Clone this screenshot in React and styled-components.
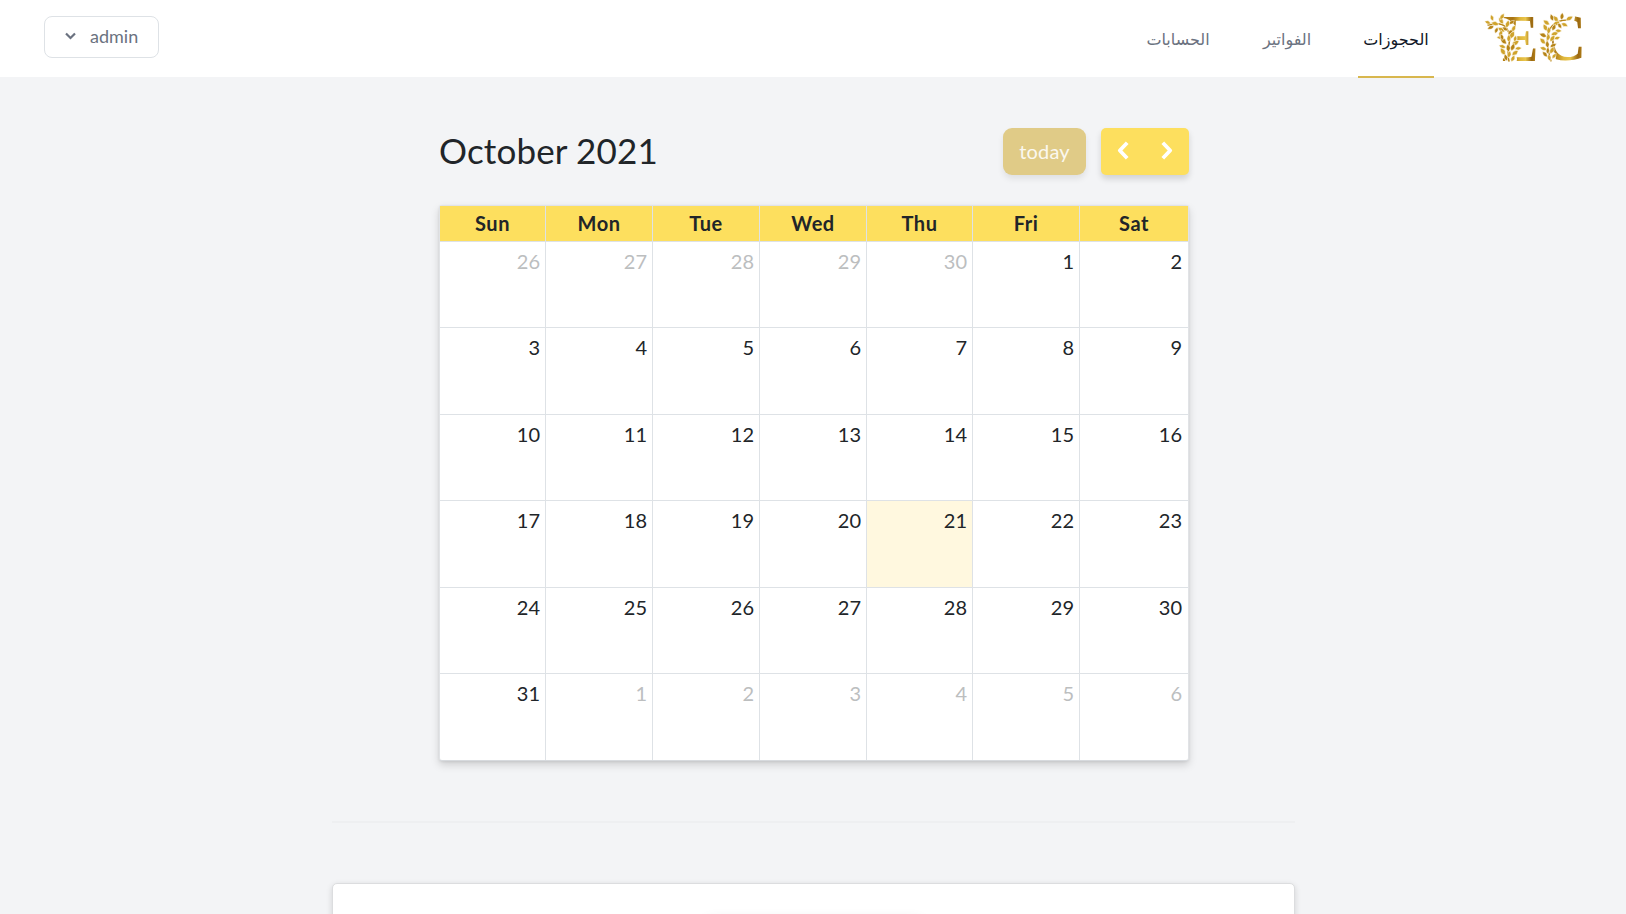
import React from 'react';
import styled, { createGlobalStyle } from 'styled-components';

const GlobalStyle = createGlobalStyle`
  * { box-sizing: border-box; }
  html, body { margin: 0; height: 100%; overflow: hidden; }
  body {
    background: #f3f4f6;
    color: #212529;
    font-family: Lato, "DejaVu Sans", sans-serif;
    font-size: 20px;
  }
  button { font: inherit; border: 0; margin: 0; padding: 0; }
`;

const Page = styled.div`
  height: 100vh;
  overflow: hidden;
  display: flex;
  flex-direction: column;
  align-items: center;
`;

const TopBar = styled.header`
  width: 100%;
  height: 77px;
  flex: none;
  background: #fff;
  display: flex;
  justify-content: space-between;
  padding: 0 40px 0 44px;
`;

const UserButton = styled.button`
  width: 115px;
  height: 42px;
  margin-top: 16px;
  padding: 0 0 2px 20px;
  display: flex;
  align-items: center;
  gap: 14px;
  background: #fff;
  border: 1px solid #dee2e6;
  border-radius: 8px;
  color: #6b7280;
  font-size: 18px;
`;

const NavArea = styled.div`
  display: flex;
`;

const Nav = styled.nav`
  display: flex;
  gap: 40px;
  height: 78px;
  margin-right: 49px;
`;

const NavLink = styled.a`
  width: ${(p) => p.$width}px;
  height: 78px;
  display: flex;
  justify-content: center;
  padding-top: 28px;
  line-height: 24px;
  font-family: "DejaVu Sans", sans-serif;
  font-size: 16px;
  white-space: nowrap;
  color: ${(p) => (p.$active ? '#111827' : '#6b7280')};
  border-bottom: 2px solid ${(p) => (p.$active ? '#d8b74e' : 'transparent')};
`;

const Logo = styled.svg`
  width: 103px;
  height: 77px;
`;

const Calendar = styled.main`
  width: 750px;
  flex: none;
  margin: 51px 0 0 2px;
`;

const Toolbar = styled.div`
  height: 47px;
  display: flex;
  align-items: center;
  justify-content: space-between;
  margin-bottom: 30px;
`;

const Title = styled.h2`
  margin: 0;
  font-weight: 400;
  font-size: 35px;
  line-height: 45px;
  padding-bottom: 2px;
  letter-spacing: 0.15px;
`;

const Controls = styled.div`
  display: flex;
  gap: 15px;
`;

const TodayButton = styled.button`
  width: 83px;
  height: 47px;
  padding-bottom: 2px;
  border-radius: 9px;
  background: #e0cb87;
  color: #fbf8ef;
  font-size: 20px;
  letter-spacing: 0.2px;
  box-shadow: 0 4px 6px rgba(0, 0, 0, 0.08);
`;

const ArrowGroup = styled.div`
  width: 88px;
  height: 47px;
  display: flex;
  border-radius: 5px;
  background: #fddf5e;
  box-shadow: 0 4px 6px rgba(0, 0, 0, 0.14);
`;

const ArrowButton = styled.button`
  flex: 1;
  background: transparent;
  display: flex;
  align-items: center;
  justify-content: center;
  padding-bottom: 2px;
`;

const Grid = styled.div`
  width: 750px;
  height: 556px;
  border: 1px solid #e1e3e6;
  border-bottom-color: #d7dade;
  border-radius: 3px;
  background: #fff;
  box-shadow: 0 4px 8px rgba(0, 0, 0, 0.15), 0 1px 3px rgba(0, 0, 0, 0.08);
  display: grid;
  grid-template-columns: 106px 107px 107px 107px 106px 107px 108px;
  grid-template-rows: 36px 86px 87px 86px 87px 86px 86px;
`;

const HeadCell = styled.div`
  background: #fddf5e;
  border-right: ${(p) => (p.$last ? 0 : '1px solid #dee2e6')};
  border-bottom: 1px solid #dee2e6;
  font-weight: 700;
  letter-spacing: 0.5px;
  text-align: center;
  line-height: 35px;
`;

const DayCell = styled.div`
  border-right: ${(p) => (p.$last ? 0 : '1px solid #dee2e6')};
  border-bottom: ${(p) => (p.$bottom ? 0 : '1px solid #dee2e6')};
  background: ${(p) => (p.$today ? '#fff8df' : 'transparent')};
  color: ${(p) => (p.$muted ? '#bcbebf' : '#212529')};
  padding: 5px ${(p) => (p.$last ? 6 : 5)}px 0 0;
  text-align: right;
  line-height: 29px;
`;

const Divider = styled.hr`
  width: 963px;
  height: 2px;
  flex: none;
  margin: 60px 0 60px 1px;
  border: 0;
  background: #eeeff1;
`;

const Panel = styled.section`
  width: 963px;
  height: 160px;
  flex: none;
  margin-left: 1px;
  display: flex;
  justify-content: center;
  padding-top: 33px;
  background: #fff;
  border: 1px solid #dcdddf;
  border-radius: 5px;
  box-shadow: 0 2px 6px rgba(0, 0, 0, 0.14);
`;

const PanelInner = styled.div`
  width: 216px;
  height: 80px;
  border-radius: 6px;
  background: #fff;
  box-shadow: 0 4px 14px rgba(0, 0, 0, 0.12);
`;

const dayNames = ['Sun', 'Mon', 'Tue', 'Wed', 'Thu', 'Fri', 'Sat'];
const days = Array.from({ length: 42 }, (_, i) => {
  if (i < 5) return { label: 26 + i, muted: true };
  if (i > 35) return { label: i - 35, muted: true };
  return { label: i - 4, muted: false };
});

/* Each leaf: x, y, rotation, scale */
const leavesE = [
  [15, 13, -78, 1], [10, 15, -118, 0.9], [7, 12, -70, 0.8], [20, 12, -35, 1], [14, 17, -160, 0.8],
  [24, 16, 15, 1], [21, 20, -60, 1], [26, 23, 50, 1], [20, 26, -95, 0.9], [28, 27, 25, 1.1],
  [23, 32, -45, 1.1], [30, 34, 55, 1.1], [22, 36, -75, 0.9], [29, 39, 20, 1], [22, 43, -35, 1.1],
  [30, 44, 50, 1], [24, 49, -20, 0.9], [29, 50, 25, 0.9], [18, 20, 190, 0.9], [27, 13, 50, 0.8],
  [18, 8, 30, 0.9], [10, 9, -20, 0.8], [18, 24, 160, 0.8], [30, 20, 20, 0.9], [32, 30, 10, 0.8],
  [26, 40, -10, 1], [26, 30, 0, 0.9], [26, 46, 10, 0.9], [20, 17, 120, 0.8], [33, 38, 80, 0.8],
];
const leavesC = [
  [84, 9, 60, 1], [79, 8, 5, 0.9], [75, 10, -40, 1], [79, 13, 110, 0.9], [70, 9, -20, 0.9],
  [71, 14, 60, 1], [66, 13, -55, 1], [70, 19, 25, 0.9], [64, 19, -30, 1], [69, 24, 70, 1],
  [63, 25, -70, 1], [68, 30, 35, 1], [62, 32, -45, 1], [68, 36, 60, 0.9], [63, 38, -75, 0.9],
  [68, 42, 25, 1], [64, 45, -45, 0.9], [70, 47, 35, 0.8], [67, 49, -15, 0.8],
  [75, 13, 140, 0.8], [66, 22, 0, 0.9], [65, 29, 10, 0.9], [65, 36, -10, 0.9], [73, 20, 90, 0.8],
  [72, 28, 70, 0.8], [65, 42, 0, 0.8],
];

function Leaves({ items }) {
  return items.map(([x, y, r, s], i) => (
    <path
      key={i}
      d="M0 1C-3-1-3-4 0-7C1-5 3-3 1-1L0 1Z"
      transform={`translate(${x} ${y}) rotate(${r}) scale(${s})`}
      fill={i % 3 === 1 ? '#b58316' : '#cfa32c'}
      stroke="#fffaf0"
      strokeWidth="0.6"
    />
  ));
}

function BrandLogo() {
  return (
    <Logo viewBox="0 -11 103 77" direction="ltr">
      <defs>
        <linearGradient id="gold" x1="0" x2="1">
          <stop offset="0" stopColor="#b78212" />
          <stop offset="0.3" stopColor="#a87414" />
          <stop offset="0.5" stopColor="#dfb63a" />
          <stop offset="0.65" stopColor="#e9c54c" />
          <stop offset="0.82" stopColor="#9a6811" />
          <stop offset="1" stopColor="#c99520" />
        </linearGradient>
      </defs>
      <g fill="url(#gold)" fontFamily="Liberation Serif, serif" fontSize="67" fontWeight="700">
        <text transform="translate(19 49.5) scale(0.81 1)" x="0" y="0">E</text>
        <text transform="translate(57 49) scale(0.96 1)" x="0" y="0">C</text>
      </g>
      <g fill="none" strokeLinecap="round">
        <path d="M28 48C25 37 31 28 27 18C22 10 12 13 5 14" stroke="#fff" strokeWidth="12" />
        <path d="M66 46C60 37 61 23 68 15C73 10 79 6 85 6" stroke="#fff" strokeWidth="14" />
        <path d="M26 50C22 37 31 28 24 18C20 11 12 13 5 14" stroke="#b98617" strokeWidth="1.5" />
        <path d="M68 50C64 37 62 23 69 15C73 10 79 9 85 9" stroke="#b98617" strokeWidth="1.3" />
      </g>
      <Leaves items={leavesE} />
      <Leaves items={leavesC} />
    </Logo>
  );
}

function Arrow({ left }) {
  return (
    <svg width="12" height="19" viewBox="0 0 12 19" fill="none" stroke="#fff" strokeWidth="3.8" strokeLinejoin="round">
      <path d={left ? 'M10.2 1.8L2.8 9.5L10.2 17.2' : 'M1.8 1.8L9.2 9.5L1.8 17.2'} />
    </svg>
  );
}

export default function App() {
  return (
    <Page>
      <GlobalStyle />
      <TopBar>
        <UserButton>
          <svg width="11" height="8" viewBox="0 0 11 8" fill="none" stroke="#6b7280" strokeWidth="2.2">
            <path d="M1 1.5L5.5 6L10 1.5" />
          </svg>
          admin
        </UserButton>
        <NavArea>
          <Nav>
            <NavLink $width={76}>الحسابات</NavLink>
            <NavLink $width={62}>الفواتير</NavLink>
            <NavLink $width={76} $active>الحجوزات</NavLink>
          </Nav>
          <BrandLogo />
        </NavArea>
      </TopBar>
      <Calendar>
        <Toolbar>
          <Title>October 2021</Title>
          <Controls>
            <TodayButton>today</TodayButton>
            <ArrowGroup>
              <ArrowButton aria-label="previous"><Arrow left /></ArrowButton>
              <ArrowButton aria-label="next"><Arrow /></ArrowButton>
            </ArrowGroup>
          </Controls>
        </Toolbar>
        <Grid>
          {dayNames.map((name, i) => (
            <HeadCell key={name} $last={i === 6}>{name}</HeadCell>
          ))}
          {days.map((day, i) => (
            <DayCell
              key={i}
              $muted={day.muted}
              $today={i === 25}
              $last={i % 7 === 6}
              $bottom={i > 34}
            >
              {day.label}
            </DayCell>
          ))}
        </Grid>
      </Calendar>
      <Divider />
      <Panel>
        <PanelInner />
      </Panel>
    </Page>
  );
}
